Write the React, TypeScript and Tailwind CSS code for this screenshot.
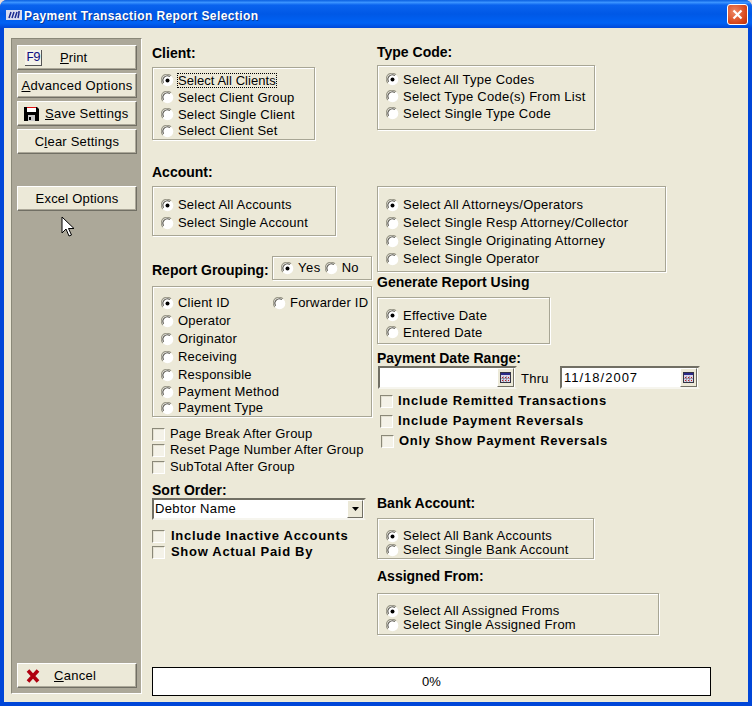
import React from "react";

const FONT = "font-['Liberation_Sans',Arial,sans-serif]";

function RadioDot({ on }: { on?: boolean }) {
  return (
    <svg width="13" height="13" viewBox="0 0 13 13" className="shrink-0">
      <circle cx="6.5" cy="6.5" r="5.8" fill="#ffffff" />
      <path d="M1.9 10 A5.6 5.6 0 0 1 10 1.9" fill="none" stroke="#9a9888" strokeWidth="1.1" />
      <path d="M2.6 8.8 A4.5 4.5 0 0 1 8.8 2.6" fill="none" stroke="#55534a" strokeWidth="1.1" />
      {on && <circle cx="6.5" cy="6.5" r="2" fill="#000000" />}
    </svg>
  );
}

function Radio({
  label,
  on,
  h = "h-[17px]",
  focus,
}: {
  label: string;
  on?: boolean;
  h?: string;
  focus?: boolean;
}) {
  return (
    <div className={`flex items-center gap-[4px] ${h}`}>
      <RadioDot on={on} />
      <span className={focus ? "outline-1 outline-dotted outline-black leading-[13px] tracking-[0.05px]" : ""}>{label}</span>
    </div>
  );
}

function Check({
  label,
  h = "h-[16px]",
  bold,
  gap = "gap-[5px]",
  className = "",
}: {
  label: string;
  h?: string;
  bold?: boolean;
  gap?: string;
  className?: string;
}) {
  return (
    <div className={`flex items-center ${gap} ${h} ${className}`}>
      <span className="w-[13px] h-[13px] shrink-0 bg-[#f4f2e8] border border-t-[#8a8878] border-l-[#8a8878] border-r-white border-b-white shadow-[inset_1px_1px_0_#e4e1d2]" />
      <span className={bold ? "font-bold tracking-[0.7px]" : ""}>{label}</span>
    </div>
  );
}

function GroupBox({ className, children }: { className: string; children: React.ReactNode }) {
  return (
    <div className={`border border-[#a8a695] shadow-[1px_1px_0_#ffffff,inset_1px_1px_0_#ffffff] ${className}`}>
      {children}
    </div>
  );
}

function Heading({ children, className = "" }: { children: React.ReactNode; className?: string }) {
  return <div className={`h-[16px] leading-[16px] text-[14px] font-bold tracking-[0px] ${className}`}>{children}</div>;
}

function SideButton({ children, className = "" }: { children: React.ReactNode; className?: string }) {
  return (
    <div
      className={`w-[120px] h-[25px] flex items-center bg-[#ece9d8] border border-t-white border-l-white border-r-[#716f64] border-b-[#716f64] shadow-[inset_-1px_-1px_0_#aca899] ${className}`}
    >
      {children}
    </div>
  );
}

function CalendarIcon() {
  return (
    <div className="w-[17px] h-[19px] flex items-center justify-center bg-[#ece9d8] border border-t-white border-l-white border-r-[#716f64] border-b-[#716f64]">
      <svg width="11" height="11" viewBox="0 0 11 11">
        <rect x="0.5" y="0.5" width="10" height="10" fill="#d9d6e8" stroke="#333344" />
        <rect x="1" y="1" width="9" height="2" fill="#2a2a88" />
        <path d="M2 5h1v1H2zM5 5h1v1H5zM8 5h1v1H8zM2 8h1v1H2zM5 8h1v1H5zM8 8h1v1H8z" fill="#c02020" />
        <path d="M3.5 4v6M6.5 4v6M1 6.5h9" stroke="#77778a" strokeWidth="0.6" />
      </svg>
    </div>
  );
}

function DateBox({ value, className }: { value?: string; className: string }) {
  return (
    <div
      className={`h-[23px] flex items-center justify-between pl-[2px] pr-[1px] bg-white border-2 border-t-[#716f64] border-l-[#716f64] border-r-[#ece9d8] border-b-[#f6f5ee] ${className}`}
    >
      <span className="tracking-[1px]">{value}</span>
      <CalendarIcon />
    </div>
  );
}

export default function App() {
  return (
    <div className={`w-[752px] h-[706px] overflow-hidden bg-[#e9dcd8] text-[13px] tracking-[0.2px] text-black ${FONT}`}>
      <div className="h-full flex flex-col rounded-t-[7px] overflow-hidden bg-[#0046d8]">
        {/* title bar */}
        <div className="h-[28px] shrink-0 flex items-center pl-[6px] pr-[4px] bg-[linear-gradient(180deg,#0a5fe0_0%,#3a93ff_9%,#0a63ee_18%,#0058e6_50%,#0062f4_82%,#0048d8_100%)]">
          <svg width="16" height="10" viewBox="0 0 16 10" className="mr-[2px] mt-[2px]">
            <rect x="0" y="0" width="16" height="10" fill="#d8dcf0" />
            <path d="M3 8 L5 2 M6 8 L8 2 M9 8 L11 2 M12 2 L14 2 M12 8 L13 3" stroke="#1a2a90" strokeWidth="1.5" fill="none" />
          </svg>
          <span className="mt-[3px] text-white font-bold text-[12px] tracking-[0.42px] [text-shadow:1px_1px_0_#0a3a9a]">
            Payment Transaction Report Selection
          </span>
          <div className="ml-auto w-[21px] h-[21px] rounded-[3px] border border-white bg-[radial-gradient(circle_at_35%_35%,#ee8866,#d8481c_65%,#b8300c)] flex items-center justify-center">
            <svg width="11" height="11" viewBox="0 0 11 11">
              <path d="M1.5 1.5 L9.5 9.5 M9.5 1.5 L1.5 9.5" stroke="#ffffff" strokeWidth="2.2" />
            </svg>
          </div>
        </div>

        {/* client area */}
        <div className="flex-1 mx-[4px] mb-[4px] bg-[#ece9d8] flex">
          {/* left toolbar panel */}
          <div className="relative w-[131px] mt-[10px] mb-[8px] ml-[7px] pt-[6px] pb-[5px] pl-[5px] flex flex-col justify-between bg-[#aca899] border border-t-[#8a8878] border-l-[#8a8878] border-r-white border-b-white">
            <div className="flex flex-col">
              <SideButton className="pl-[7px]">
                <span className="w-[17px] h-[16px] flex items-center justify-center bg-[#f4f2ea] border-r border-b border-[#555555] font-['Liberation_Mono',monospace] text-[13px] tracking-[-1px] text-[#101080] leading-none">
                  F9
                </span>
                <span className="ml-[18px] mt-[1px] tracking-[0.1px]">
                  <span className="underline">P</span>rint
                </span>
              </SideButton>
              <SideButton className="mt-[3px] justify-center">
                <span className="tracking-[0.3px]">
                  <span className="underline">A</span>dvanced Options
                </span>
              </SideButton>
              <SideButton className="mt-[3px] pl-[6px]">
                <svg width="15" height="15" viewBox="0 0 15 15">
                  <path d="M0 1 H13 L15 3 V15 H0 Z" fill="#000000" />
                  <rect x="3" y="1" width="9" height="1" fill="#e01010" />
                  <rect x="3" y="2" width="9" height="4" fill="#ffffff" />
                  <rect x="4" y="9" width="7" height="6" fill="#c8c8c8" />
                  <rect x="5" y="11" width="2" height="3" fill="#000000" />
                </svg>
                <span className="ml-[6px] mt-[1px] tracking-[0.25px]">
                  <span className="underline">S</span>ave Settings
                </span>
              </SideButton>
              <SideButton className="mt-[3px] justify-center">
                <span className="tracking-[0.2px]">
                  C<span className="underline">l</span>ear Settings
                </span>
              </SideButton>
              <SideButton className="mt-[32px] justify-center">Excel Options</SideButton>
            </div>
            {/* mouse pointer */}
            <svg width="14" height="22" viewBox="0 0 14 22" className="absolute left-[49px] top-[177px]">
              <path d="M1 1 V17 L5 13 L8 20 L10.5 19 L7.5 12.5 H13 Z" fill="#ffffff" stroke="#000000" strokeWidth="1" />
            </svg>
            <SideButton className="pl-[8px]">
              <svg width="14" height="14" viewBox="0 0 14 14">
                <path d="M2 1.5 L12 12.5 M12 1.5 L2 12.5" stroke="#b00010" strokeWidth="3.6" />
              </svg>
              <span className="ml-[14px] mt-[1px] tracking-[0.3px]">
                <span className="underline">C</span>ancel
              </span>
            </SideButton>
          </div>

          {/* form */}
          <div className="flex-1 ml-[10px] mb-[6px] flex flex-col">
            <div className="flex-1 flex">
              {/* first column */}
              <div className="w-[225px] flex flex-col">
                <Heading className="mt-[17px] tracking-[-0.3px]">Client:</Heading>
                <GroupBox className="mt-[6px] w-[163px] h-[73px] pt-[4px] pl-[8px]">
                  <Radio label="Select All Clients" on focus />
                  <Radio label="Select Client Group" />
                  <Radio label="Select Single Client" />
                  <Radio label="Select Client Set" h="h-[16px]" />
                </GroupBox>

                <Heading className="mt-[24px]">Account:</Heading>
                <GroupBox className="mt-[6px] w-[184px] h-[50px] pt-[9px] pl-[8px]">
                  <Radio label="Select All Accounts" on h="h-[18px]" />
                  <Radio label="Select Single Account" h="h-[18px]" />
                </GroupBox>

                <div className="mt-[20px] h-[24px] flex">
                  <div className="w-[120px] pt-[6px]">
                    <Heading>Report Grouping:</Heading>
                  </div>
                  <GroupBox className="w-[100px] flex items-center pl-[8px]">
                    <RadioDot on />
                    <span className="ml-[4px] tracking-[0.5px]">Yes</span>
                    <span className="ml-[4px]">
                      <RadioDot />
                    </span>
                    <span className="ml-[4px]">No</span>
                  </GroupBox>
                </div>
                <GroupBox className="mt-[6px] w-[220px] h-[131px] pt-[7px] pl-[8px]">
                  <div className="flex">
                    <div className="w-[112px]">
                      <Radio label="Client ID" on h="h-[18px]" />
                    </div>
                    <Radio label="Forwarder ID" h="h-[18px]" />
                  </div>
                  <Radio label="Operator" h="h-[18px]" />
                  <Radio label="Originator" h="h-[18px]" />
                  <Radio label="Receiving" h="h-[18px]" />
                  <Radio label="Responsible" h="h-[18px]" />
                  <Radio label="Payment Method" h="h-[16px]" />
                  <Radio label="Payment Type" h="h-[16px]" />
                </GroupBox>

                <Check label="Page Break After Group" className="mt-[9px]" />
                <Check label="Reset Page Number After Group" />
                <Check label="SubTotal After Group" className="mt-[1px]" />

                <Heading className="mt-[7px] tracking-[-0.2px]">Sort Order:</Heading>
                <div className="w-[214px] h-[22px] flex items-center justify-between pl-[1px] pr-[1px] bg-white border-2 border-t-[#716f64] border-l-[#716f64] border-r-[#ece9d8] border-b-[#f6f5ee]">
                  <span className="tracking-[0.35px]">Debtor Name</span>
                  <div className="w-[16px] h-[18px] flex items-center justify-center bg-[#ece9d8] border border-t-white border-l-white border-r-[#716f64] border-b-[#716f64]">
                    <svg width="7" height="4" viewBox="0 0 7 4">
                      <path d="M0 0 H7 L3.5 4 Z" fill="#000000" />
                    </svg>
                  </div>
                </div>
                <Check label="Include Inactive Accounts" bold gap="gap-[6px]" className="mt-[8px]" />
                <Check label="Show Actual Paid By" bold gap="gap-[6px]" />
              </div>

              {/* second column */}
              <div className="flex-1 flex flex-col tracking-[0.25px]">
                <Heading className="mt-[16px] tracking-[0.3px]">Type Code:</Heading>
                <GroupBox className="mt-[5px] w-[218px] h-[65px] pt-[5px] pl-[8px]">
                  <Radio label="Select All Type Codes" on />
                  <Radio label="Select Type Code(s) From List" />
                  <Radio label="Select Single Type Code" />
                </GroupBox>

                <GroupBox className="mt-[56px] w-[289px] h-[86px] pt-[9px] pl-[8px]">
                  <Radio label="Select All Attorneys/Operators" on h="h-[18px]" />
                  <Radio label="Select Single Resp Attorney/Collector" h="h-[18px]" />
                  <Radio label="Select Single Originating Attorney" h="h-[18px]" />
                  <Radio label="Select Single Operator" h="h-[18px]" />
                </GroupBox>

                <Heading className="mt-[2px] tracking-[0.25px]">Generate Report Using</Heading>
                <GroupBox className="mt-[7px] w-[173px] h-[47px] pt-[9px] pl-[8px]">
                  <Radio label="Effective Date" on />
                  <Radio label="Entered Date" />
                </GroupBox>

                <Heading className="mt-[6px] tracking-[0.15px]">Payment Date Range:</Heading>
                <div className="ml-[1px] flex items-center">
                  <DateBox className="w-[139px]" />
                  <span className="w-[43px] pl-[4px] pt-[2px]">Thru</span>
                  <DateBox className="w-[140px]" value="11/18/2007" />
                </div>
                <Check
                  label="Include Remitted Transactions"
                  bold
                  h="h-[20px]"
                  className="mt-[2px] ml-[3px]"
                />
                <Check label="Include Payment Reversals" bold h="h-[20px]" className="ml-[3px]" />
                <Check label="Only Show Payment Reversals" bold h="h-[20px]" className="ml-[4px]" />

                <Heading className="mt-[44px] tracking-[0.2px]">Bank Account:</Heading>
                <GroupBox className="mt-[7px] w-[217px] h-[41px] pt-[10px] pl-[8px]">
                  <Radio label="Select All Bank Accounts" on h="h-[14px]" />
                  <Radio label="Select Single Bank Account" h="h-[14px]" />
                </GroupBox>

                <Heading className="mt-[9px] tracking-[0.2px]">Assigned From:</Heading>
                <GroupBox className="mt-[9px] w-[282px] h-[42px] pt-[10px] pl-[8px]">
                  <Radio label="Select All Assigned Froms" on h="h-[14px]" />
                  <Radio label="Select Single Assigned From" h="h-[14px]" />
                </GroupBox>
              </div>
            </div>

            {/* progress */}
            <div className="w-[559px] h-[29px] flex items-center justify-center bg-white border border-black">
              0%
            </div>
          </div>
        </div>
      </div>
    </div>
  );
}
